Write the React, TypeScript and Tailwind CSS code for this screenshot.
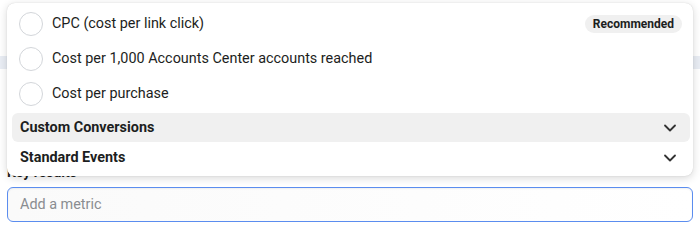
import { ChevronDown } from "lucide-react"

const options = [
  { label: "CPC (cost per link click)", recommended: true },
  { label: "Cost per 1,000 Accounts Center accounts reached", recommended: false },
  { label: "Cost per purchase", recommended: false },
]

function Radio() {
  return <span className="size-[24px] shrink-0 rounded-full border border-[#d3d6da] bg-white" />
}

export default function App() {
  return (
    <div className="relative h-[232px] w-[700px] overflow-hidden bg-white font-['Roboto',sans-serif] text-[14.4px] text-[#1c1e21]">
      {/* page behind the dropdown */}
      <div className="flex flex-col px-[7px]">
        <div className="-mx-[7px] mt-[56px] h-[13px] bg-[#e9edf4]" />
        <div className="mt-[95px] h-[17px] text-[14px] font-bold leading-[17px]">Key results</div>
        <div className="mt-[6px] flex h-[35px] items-center rounded-[6px] border border-[#5b8def] bg-gradient-to-r from-[#fafafa] to-white px-[12px] text-[#8a8d91] shadow-[inset_0_1px_2px_rgba(0,0,0,0.06)]">
          Add a metric
        </div>
      </div>

      {/* dropdown menu */}
      <div className="absolute left-[7px] top-[3px] flex w-[686px] flex-col rounded-[8px] bg-white pb-[3px] pt-[3px] shadow-[0_2px_8px_rgba(0,0,0,0.16),0_0_1px_rgba(0,0,0,0.2)]">
        {options.map((o) => (
          <div key={o.label} className="flex h-[35px] items-center pl-[12px] pr-[11px]">
            <Radio />
            <span className="ml-[9px] flex-1">{o.label}</span>
            {o.recommended && (
              <span className="rounded-full bg-[#f0f0f0] px-[8px] py-[2px] text-[12px] font-bold leading-[14px]">
                Recommended
              </span>
            )}
          </div>
        ))}
        <div className="ml-[5px] mr-[3px] mt-[2px] flex h-[29px] items-center justify-between rounded-[6px] bg-[#f0f0f0] pl-[8px] pr-[10px]">
          <span className="font-bold">Custom Conversions</span>
          <ChevronDown className="size-[20px] text-[#333]" strokeWidth={2.2} />
        </div>
        <div className="ml-[5px] mr-[3px] flex h-[31px] items-center justify-between pl-[8px] pr-[10px]">
          <span className="font-bold">Standard Events</span>
          <ChevronDown className="size-[20px] text-[#333]" strokeWidth={2.2} />
        </div>
      </div>
    </div>
  )
}
